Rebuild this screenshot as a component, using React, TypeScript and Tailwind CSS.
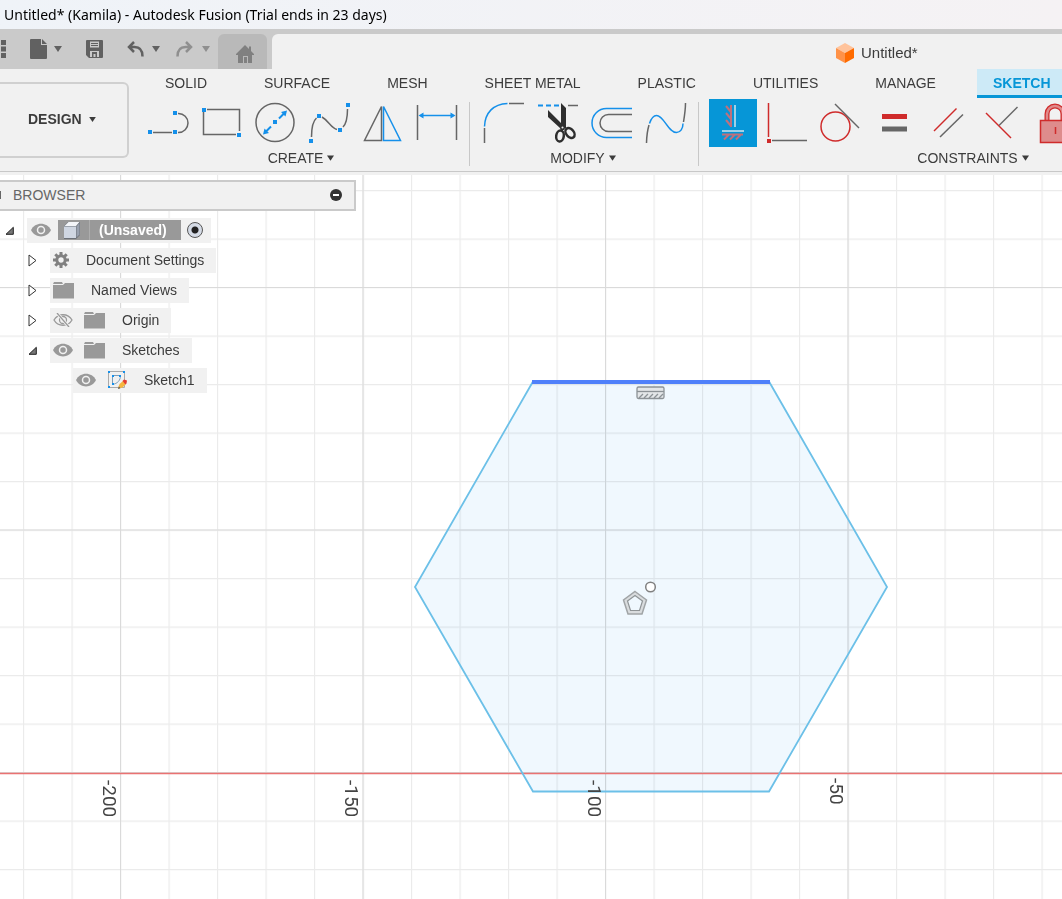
import React, { useState } from "react";

const GRAY = "#666666";
const BLUE = "#1590ea";
const RED = "#cf2b2b";

const tabs = ["SOLID", "SURFACE", "MESH", "SHEET METAL", "PLASTIC", "UTILITIES", "MANAGE", "SKETCH"];

type Point = [number, number];

// Small blue handles on sketch tools
const Handles = ({ points }: { points: Point[] }) => (
  <g fill={BLUE} stroke="none">
    {points.map(([x, y]) => (
      <rect key={`${x}-${y}`} x={x - 2} y={y - 2} width="4" height="4" />
    ))}
  </g>
);

const createTools = [
  {
    name: "Line",
    icon: (
      <>
        <path d="M9 33.5H28M34 14.5h.5a9.5 9.5 0 0 1 0 19H34" />
        <Handles points={[[6, 33], [31, 33], [31, 14]]} />
      </>
    ),
  },
  {
    name: "Rectangle",
    icon: (
      <>
        <path d="M9 10.5H41.5V32M38 35.5H5.5V13" />
        <Handles points={[[6, 11], [41, 36]]} />
      </>
    ),
  },
  {
    name: "Circle",
    icon: (
      <>
        <circle cx="23" cy="23.5" r="19" />
        <path d="M14 32.5l5-5M27 19.5l5-5" stroke={BLUE} strokeWidth="2" />
        <path d="M11 35.5l1.5-6 4.5 4.5zM35 11.5l-1.5 6-4.5-4.5z" fill={BLUE} stroke="none" />
        <Handles points={[[23, 23]]} />
      </>
    ),
  },
  {
    name: "Spline",
    icon: (
      <>
        <path d="M5.500 38C5.500 28 7 22 10.500 19M16 18C23 22 25 29 31 30.500M37 28C40 25 41.500 18 41.500 10" />
        <Handles points={[[5, 42], [13, 17], [34, 31], [42, 6]]} />
      </>
    ),
  },
  {
    name: "Mirror",
    icon: (
      <>
        <path d="M21.5 7.5V41.5H4.500z" />
        <path d="M23.5 7.5V41.5H40.500z" stroke={BLUE} />
      </>
    ),
  },
  {
    name: "Sketch Dimension",
    icon: (
      <>
        <path d="M3.5 6V41M42.5 6V41" />
        <path d="M8 16.5H38" stroke={BLUE} />
        <path d="M4.5 16.5l5-3v6zM41.5 16.5l-5-3v6z" fill={BLUE} stroke="none" />
      </>
    ),
  },
];

const modifyTools = [
  {
    name: "Fillet",
    icon: (
      <>
        <path d="M4.5 29V44M29 4.5H44" />
        <path d="M4.5 27.5C5 14 13 5 27.5 4.5" stroke={BLUE} />
      </>
    ),
  },
  {
    name: "Trim",
    icon: (
      <>
        <path d="M4 6.5H25" stroke={BLUE} strokeWidth="2" strokeDasharray="5 3" />
        <path d="M34 6.5H44" />
        <path d="M27 4l5 5v20h-6L14 18v-7l13 13z" fill="#2e2e2e" stroke="none" />
        <g stroke="#2e2e2e" strokeWidth="2.5">
          <ellipse cx="26" cy="37" rx="3.800" ry="5.500" transform="rotate(8 26 37)" />
          <ellipse cx="36" cy="34" rx="3.800" ry="5.500" transform="rotate(-40 36 34)" />
        </g>
        <circle cx="28.5" cy="28.5" r="1.800" fill="#f1f1f1" stroke="#2e2e2e" />
      </>
    ),
  },
  {
    name: "Offset",
    icon: (
      <>
        <path d="M44 9.5H18.5a14.5 14.5 0 0 0 0 29H44" stroke={BLUE} />
        <path d="M44 15.5H20.5a8.5 8.5 0 0 0 0 17H44" />
      </>
    ),
  },
  {
    name: "Extend",
    icon: (
      <>
        <path d="M4.5 44C4.7 36 5.500 31 7 26M41.5 23C42.5 17 43.5 11 43.5 4" />
        <path
          d="M7.5 24.5C9.5 18.5 12 16.5 14.5 16.5C22 16.5 26 33.5 34.5 33.5C38.5 33.5 41 29.5 41 24.5"
          stroke={BLUE}
        />
      </>
    ),
  },
];

const constraintTools = [
  {
    name: "Horizontal/Vertical",
    icon: (
      <>
        <g stroke="#c0707c" strokeWidth="2">
          <path d="M22 6V28M22 13l-5-6M22 20l-5-6M22 27l-5-6" />
          <path d="M13 35.5H34M20 35.5l-5 5M26 35.5l-5 5M32 35.5l-5 5" />
        </g>
        <path d="M26 6V28M13 32H35" stroke="#9fd0e8" strokeWidth="2" />
      </>
    ),
  },
  {
    name: "Perpendicular",
    icon: (
      <>
        <path d="M5.5 4V38" stroke={RED} />
        <rect x="4" y="40" width="4" height="4" fill={RED} stroke="none" />
        <path d="M9 41.5H44" />
      </>
    ),
  },
  {
    name: "Tangent",
    icon: (
      <>
        <circle cx="18.5" cy="27.5" r="14.5" stroke={RED} />
        <path d="M18 5L42 29" />
      </>
    ),
  },
  {
    name: "Equal",
    icon: (
      <>
        <path d="M11 17.5H36" stroke={RED} strokeWidth="5" />
        <path d="M11 30H36" strokeWidth="5" />
      </>
    ),
  },
  {
    name: "Parallel",
    icon: (
      <>
        <path d="M9 32L31.5 9.5" stroke={RED} />
        <path d="M15 38L38 15.5" />
      </>
    ),
  },
  {
    name: "Midpoint",
    icon: (
      <>
        <path d="M7 14L32 39" stroke={RED} />
        <path d="M20 26.5L38.5 8" />
      </>
    ),
  },
  {
    name: "Fix/UnFix",
    icon: (
      <>
        <path d="M14 21V15a8 8 0 0 1 16 0V21" stroke={RED} strokeWidth="5" />
        <path d="M14 21V15a8 8 0 0 1 16 0V21" stroke="#e08a8a" strokeWidth="2.5" />
        <rect x="7.5" y="21.5" width="30" height="22" fill="#de8c8c" stroke={RED} />
        <path d="M22.5 28V35" stroke={RED} />
      </>
    ),
  },
];

const Caret = ({ className = "" }: { className?: string }) => (
  <svg className={className} width="8" height="6" viewBox="0 0 8 6" fill="currentColor" aria-hidden="true">
    <path d="M0 0h8L4 6z" />
  </svg>
);

interface ToolGroupProps {
  title: string;
  tools: { name: string; icon: React.ReactNode }[];
  className?: string;
  active?: string;
  onSelect?: (name: string) => void;
}

const ToolGroup: React.FC<ToolGroupProps> = ({ title, tools, className = "", active, onSelect }) => (
  <div className={`flex shrink-0 flex-col items-center ${className}`}>
    <div className="flex w-full gap-1.5">
      {tools.map((tool) => (
        <button
          key={tool.name}
          type="button"
          aria-label={tool.name}
          onClick={() => onSelect?.(tool.name)}
          className={`h-12 w-12 shrink-0 ${active === tool.name ? "bg-[#0696d7]" : ""}`}
        >
          <svg width="48" height="48" viewBox="0 0 48 48" fill="none" stroke={GRAY} strokeWidth="1.5">
            {tool.icon}
          </svg>
        </button>
      ))}
    </div>
    <button type="button" className="mr-1 flex h-[22px] items-center gap-1 text-sm text-[#3c3c3c]">
      {title}
      <Caret className="mb-px h-[6px] w-[7px]" />
    </button>
  </div>
);

const QuickAccess = () => (
  <div className="flex h-10 bg-[#cacaca] text-[#616161]">
    <button type="button" aria-label="Show Data Panel" className="w-1.5">
      <svg width="6" height="18" viewBox="0 0 6 18" fill="currentColor">
        <path d="M1 0h5v5H1zM1 6.500h5v5H1zM1 13h5v5H1z" />
      </svg>
    </button>
    <button type="button" aria-label="File" className="ml-6 flex w-8 items-center justify-between">
      <svg width="17" height="20" viewBox="0 0 17 20" fill="currentColor">
        <path d="M1 0h10v6h6v13a1 1 0 0 1-1 1H1a1 1 0 0 1-1-1V1a1 1 0 0 1 1-1zM12 0l5 5h-5z" />
      </svg>
      <Caret />
    </button>
    <button type="button" aria-label="Save" className="ml-6 w-[17px]">
      <svg width="17" height="18" viewBox="0 0 17 18" fill="currentColor" fillRule="evenodd">
        <path d="M1 0h15a1 1 0 0 1 1 1v16a1 1 0 0 1-1 1H3l-3-3V1a1 1 0 0 1 1-1zM4 1.500v6h9v-6zM4 11v6h9v-6z" />
        <path d="M5 3h7v1H5zM5 5h7v1H5zM6 12h5v5H9.500v-3h-2v3H6z" />
      </svg>
    </button>
    <button type="button" aria-label="Undo" className="ml-6 flex w-[33px] items-center justify-between">
      <svg width="17" height="16" viewBox="0 0 17 16" fill="none" stroke="currentColor" strokeWidth="2.5">
        <path d="M7 1L2 6l5 5M2 6h5.500c5 0 8 3 8 9.500" />
      </svg>
      <Caret />
    </button>
    <button type="button" aria-label="Redo" className="ml-4 flex w-[34px] items-center justify-between text-[#8f8f8f]">
      <svg width="17" height="16" viewBox="0 0 17 16" fill="none" stroke="currentColor" strokeWidth="2.5">
        <path d="M10 1l5 5-5 5M15 6H9.500c-5 0-8 3-8 9.500" />
      </svg>
      <Caret />
    </button>
    <button
      type="button"
      aria-label="Home"
      className="mt-[5px] ml-2 flex w-[49px] items-center justify-center rounded-t-md bg-[#b9b9b9] pt-1 pl-1 text-[#808080]"
    >
      <svg width="18" height="18" viewBox="0 0 18 18" fill="currentColor">
        <path d="M9 0l4 4V1.500h2V6l3 3v1h-2v8h-4v-7H7v7H2v-8H0V9z" />
        <path d="M8 12h3v6H8z" />
      </svg>
    </button>
    <div className="mt-[5px] ml-[5px] flex flex-1 items-center gap-[7px] overflow-hidden rounded-tl-md bg-[#f1f1f1] pt-[3px] pl-[564px] text-[15px] text-[#3c3c3c]">
      <svg className="shrink-0" width="18" height="20" viewBox="0 0 18 20">
        <path d="M9 0l9 5-9 5-9-5z" fill="#ffc39b" />
        <path d="M0 5l9 5v10l-9-5z" fill="#ff9248" />
        <path d="M18 5l-9 5v10l9-5z" fill="#ff6b00" />
      </svg>
      Untitled*
    </div>
  </div>
);

const Ribbon = () => {
  const [activeTab, setActiveTab] = useState("SKETCH");
  const [activeTool, setActiveTool] = useState("Horizontal/Vertical");

  return (
    <header className="flex h-[103px] overflow-hidden border-b border-[#c8c8c8] bg-[#f1f1f1] text-[#3c3c3c]">
      <button
        type="button"
        className="mt-[13px] flex h-[76px] w-[129px] shrink-0 items-center gap-[7px] rounded-r-md border-2 border-l-0 border-[#d0d0d0] pb-0.5 pl-7 text-sm font-bold"
      >
        DESIGN
        <Caret className="h-[5px] w-[7px]" />
      </button>
      <div>
        <nav className="flex gap-[25px] pl-5">
          {tabs.map((tab) => (
            <button
              key={tab}
              type="button"
              onClick={() => setActiveTab(tab)}
              className={`h-[29px] shrink-0 border-b-3 px-4 pt-0.5 text-sm whitespace-nowrap ${
                activeTab === tab ? "border-[#0696d7] bg-[#cdeaf7] font-bold text-[#0696d7]" : "border-transparent"
              }`}
            >
              {tab}
            </button>
          ))}
        </nav>
        <div className="flex pt-px pl-[15px]">
          <ToolGroup title="CREATE" tools={createTools} />
          <div className="mt-[3px] mr-[10px] ml-[7px] h-16 w-px shrink-0 bg-[#c8c8c8]" />
          <ToolGroup title="MODIFY" tools={modifyTools} />
          <div className="mt-[3px] mr-[10px] ml-2 h-16 w-px shrink-0 bg-[#c8c8c8]" />
          <ToolGroup
            title="CONSTRAINTS"
            tools={constraintTools}
            className="w-[532px]"
            active={activeTool}
            onSelect={setActiveTool}
          />
        </div>
      </div>
    </header>
  );
};

const Eye = ({ hidden = false }: { hidden?: boolean }) => (
  <svg className="shrink-0" width="20" height="14" viewBox="0 0 20 14">
    {hidden ? (
      <g fill="none" stroke="#999" strokeWidth="1.300">
        <path d="M1 7c4-7 14-7 18 0-4 7-14 7-18 0z" />
        <circle cx="10" cy="7" r="3.500" />
        <path d="M4 0l12 14" stroke="#f1f1f1" strokeWidth="3" />
        <path d="M4 0l12 14" />
      </g>
    ) : (
      <>
        <path d="M0 7c4-8.500 16-8.500 20 0-4 8.500-16 8.500-20 0z" fill="#999" />
        <circle cx="10" cy="7" r="3.500" fill="#999" stroke="#f1f1f1" strokeWidth="1.500" />
      </>
    )}
  </svg>
);

const Folder = () => (
  <svg className="shrink-0" width="21" height="17" viewBox="0 0 21 17" fill="#999">
    <path d="M1 0h8l1 2H0zM0 3h10l2-2h9v15.500H0z" />
  </svg>
);

const Gear = () => (
  <svg className="shrink-0" width="16" height="16" viewBox="0 0 16 16" fill="none" stroke="#808080">
    <circle cx="8" cy="8" r="4.200" strokeWidth="3" />
    <path
      d="M8 0v3M8 13v3M0 8h3M13 8h3M2.300 2.300l2.200 2.200M11.500 11.500l2.200 2.200M2.300 13.700l2.200-2.200M11.500 4.500l2.200-2.200"
      strokeWidth="3"
    />
  </svg>
);

const SketchIcon = () => (
  <svg className="shrink-0" width="20" height="20" viewBox="0 0 20 20" fill="none">
    <path d="M1.5 1.5h16v16h-16z" stroke="#aaa" />
    <path d="M5.5 5.5v9c5-1 8-4 8-9z" stroke="#7d9db8" />
    <path d="M1 1h2v2H1zM16 1h2v2h-2zM1 16h2v2H1zM5 5h2v2H5zM12 5h2v2h-2zM5 13h2v2H5z" fill={BLUE} />
    <path d="M11 18.500l1.500-4.500 3.500-3 3 3-3.500 3.500z" fill="#f5b640" />
    <path d="M15.500 11l1.500-1.500 3 1-.5 3-1 1z" fill="#e23b30" />
    <path d="M11 19l.8-2.500 1.700 1.700z" fill="#555" />
  </svg>
);

const Expander = ({ open = false }: { open?: boolean }) => (
  <button type="button" aria-label={open ? "Collapse" : "Expand"} className="flex w-2.5 shrink-0 justify-center">
    {open ? (
      <svg width="9" height="9" viewBox="0 0 9 9">
        <path d="M1 8.300h7.300V1.300z" fill="#777" stroke="#222" />
      </svg>
    ) : (
      <svg width="9" height="13" viewBox="0 0 9 13">
        <path d="M1 1v11l7-5.500z" fill="#fff" stroke="#333" />
      </svg>
    )}
  </button>
);

const treeRows = [
  { label: "Document Settings", indent: "pl-[27px]", open: false, icons: <Gear /> },
  { label: "Named Views", indent: "pl-[27px]", open: false, icons: <Folder /> },
  {
    label: "Origin",
    indent: "pl-[27px]",
    open: false,
    icons: (
      <>
        <Eye hidden />
        <Folder />
      </>
    ),
  },
  {
    label: "Sketches",
    indent: "pl-[27px]",
    open: true,
    icons: (
      <>
        <Eye />
        <Folder />
      </>
    ),
  },
  {
    label: "Sketch1",
    indent: "pl-[73px]",
    icons: (
      <>
        <Eye />
        <SketchIcon />
      </>
    ),
  },
];

const BrowserPanel = () => (
  <aside className="relative w-[356px] text-sm text-[#3c3c3c]">
    <div className="flex h-[31px] items-center border-2 border-l-0 border-[#cacaca] bg-[#f1f1f1] pr-3 pb-px text-[#666]">
      <span className="h-2 w-px bg-[#666]" />
      <h2 className="flex-1 pl-3">BROWSER</h2>
      <button type="button" aria-label="Minimize">
        <svg width="12" height="12" viewBox="0 0 12 12">
          <circle cx="6" cy="6" r="6" fill="#333" />
          <path d="M3 6h6" stroke="#fff" strokeWidth="2" />
        </svg>
      </button>
    </div>

    <ul className="pt-1">
      <li className="flex h-[30px] items-center gap-[13px] pl-1">
        <Expander open />
        <div className="flex h-[25px] items-center bg-[#f1f1f1] pr-2 pl-1">
          <Eye />
          <div className="ml-[7px] flex h-5 items-center bg-[#999] pr-3.5 font-bold text-white">
            <div className="flex h-full w-8 items-center border-r border-[#adadad] pl-1.5">
              <svg width="16" height="17" viewBox="0 0 16 17">
                <path d="M0 4l4-4h12v13l-4 4H0z" fill="#6b7078" />
                <path d="M0 4.500h12V16H0z" fill="#cfd6e2" />
                <path d="M.5 4L4.500 0H15.500l-3.500 4z" fill="#f3f5f9" />
                <path d="M12.500 4.500L15.500 1v11.500l-3 3z" fill="#98a0ae" />
              </svg>
            </div>
            <span className="pl-[9px]">(Unsaved)</span>
          </div>
          <label className="ml-1.5 flex">
            <input
              type="radio"
              name="active-component"
              aria-label="Activate component"
              defaultChecked
              className="h-4 w-4 appearance-none rounded-full border border-[#555] bg-[radial-gradient(circle,#222_0_3px,#d5dbe6_4px)]"
            />
          </label>
        </div>
      </li>
      {treeRows.map((row) => (
        <li key={row.label} className={`flex h-[30px] items-center gap-[13px] ${row.indent}`}>
          {row.open !== undefined && <Expander open={row.open} />}
          <div className="flex h-[25px] items-center gap-[17px] bg-[#f1f1f1] pr-3 pl-[3px]">
            <div className="flex items-center gap-[11px]">{row.icons}</div>
            <span>{row.label}</span>
          </div>
        </li>
      ))}
    </ul>
  </aside>
);

const axisLabels = [
  { text: "-200", x: 103, y: 605 },
  { text: "-150", x: 345, y: 605 },
  { text: "-100", x: 588, y: 605 },
  { text: "-50", x: 830, y: 603 },
];

const SketchCanvas = () => (
  <svg className="absolute inset-0 h-full w-full" aria-label="Sketch canvas">
    <defs>
      <pattern id="minor" x="23" y="15" width="48.500" height="48.500" patternUnits="userSpaceOnUse">
        <path d="M.5 0V48.500M0 .5H48.500" stroke="#ebebeb" strokeWidth="1.300" />
      </pattern>
      <pattern id="major" x="120" y="112" width="242.500" height="242.500" patternUnits="userSpaceOnUse">
        <path d="M.5 0V242.500M0 .5H242.500" stroke="#dadada" strokeWidth="1.200" />
      </pattern>
    </defs>
    <polygon points="533,206.500 769,206.500 887,412 769,616.500 533,616.500 415,412" fill="#f0f8fe" />
    <g className="mix-blend-multiply">
      <rect width="100%" height="100%" fill="url(#minor)" />
      <rect width="100%" height="100%" fill="url(#major)" />
    </g>
    <path d="M0 598.500H4000" stroke="#ea7272" strokeWidth="1.500" />
    <polygon
      points="533,206.500 769,206.500 887,412 769,616.500 533,616.500 415,412"
      fill="none"
      stroke="#6cc0e8"
      strokeWidth="1.800"
    />
    <path d="M532 207H770" stroke="#4f80fa" strokeWidth="4" />

    {/* Horizontal constraint */}
    <g fill="#e3e6e8" stroke="#8c9296" strokeWidth="1.300">
      <rect x="637" y="212" width="27" height="11.500" rx="1.500" />
      <path d="M637 216.500h27" />
      <path d="M639 223l4-4M644 223l4-4M649 223l4-4M654 223l4-4M659 223l4-4" />
    </g>

    {/* Polygon constraint and center point */}
    <path d="M635 416.500l11.500 8.500-4.500 14h-14l-4.500-14z" fill="#d9dcde" stroke="#a0a4a6" strokeWidth="1.500" />
    <path d="M635 420.500l7.500 5.500-3 9.500h-9l-3-9.500z" fill="#f0f8fe" stroke="#8f9496" strokeWidth="1.200" />
    <circle cx="650.500" cy="412" r="4.800" fill="#fff" stroke="#808080" strokeWidth="1.500" />

    <g className="font-['Roboto',sans-serif] text-[19px]" fill="#444">
      {axisLabels.map((label) => (
        <text key={label.text} transform={`translate(${label.x} ${label.y}) rotate(90)`}>
          {label.text}
        </text>
      ))}
    </g>
  </svg>
);

const App: React.FC = () => {
  return (
    <div className="flex min-h-screen flex-col overflow-hidden bg-white font-['Liberation_Sans',Arial,sans-serif]">
      <div className="flex h-[29px] items-center bg-linear-to-r from-[#eff3f8] to-[#f5f2f4] pl-1 font-['Noto_Sans',sans-serif] text-sm text-black">
        Untitled* (Kamila) - Autodesk Fusion (Trial ends in 23 days)
      </div>
      <QuickAccess />
      <Ribbon />
      <div className="h-[3px] bg-[#f1f1f1]" />
      <main className="relative flex-1 overflow-hidden pt-[5px]">
        <SketchCanvas />
        <BrowserPanel />
      </main>
    </div>
  );
};

export default App;
